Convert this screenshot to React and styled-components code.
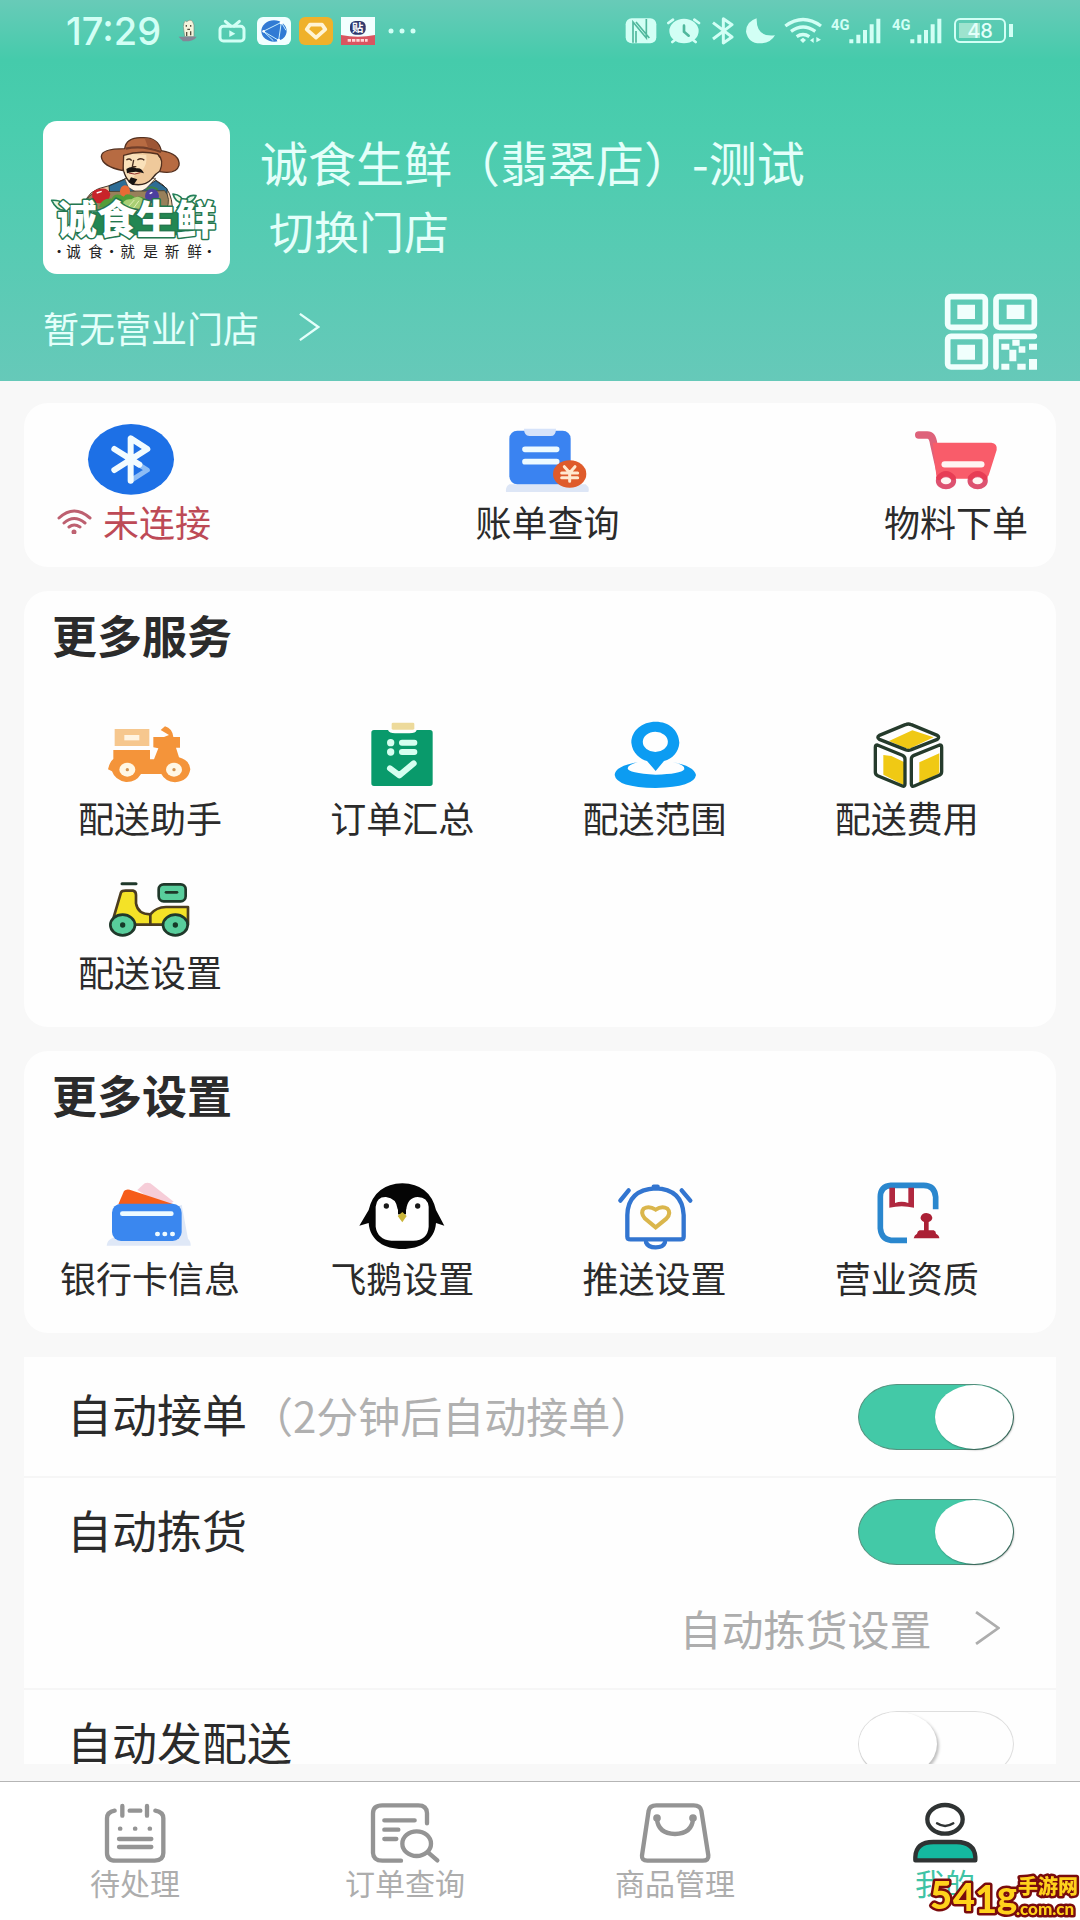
import React, { useState } from 'react';
import styled, { createGlobalStyle } from 'styled-components';

const GlobalStyle = createGlobalStyle`
    * {
        box-sizing: border-box;
    }

    body {
        margin: 0;
        color: #2b2b2b;
        background: #f8f8f8;
        font-family: "Noto Sans CJK SC", sans-serif;
    }

    button, input {
        margin: 0;
        padding: 0;
        border: 0;
        color: inherit;
        background: none;
        font: inherit;
    }

    a {
        color: inherit;
        text-decoration: none;
    }

    svg {
        display: block;
        flex: none;
    }
`;

const Page = styled.div`
    display: flex;
    flex-direction: column;
    height: 100vh;
    overflow: hidden;
`;

/* header */

const Hero = styled.header`
    flex: none;
    color: #e4fffa;
    background: linear-gradient(#68cbb8 0, #45cbab 60px, #4acdae 130px, #66c9b9 100%);
`;

const StatusBar = styled.div`
    display: flex;
    justify-content: space-between;
    align-items: center;
    height: 60px;
    padding: 2px 67px 0 66px;
    color: #d2fff5;
`;

const StatusGroup = styled.div`
    display: flex;
    align-items: center;
    gap: ${props => props.$gap}px;
`;

const Clock = styled.time`
    margin-right: 4px;
    font: 500 38px/40px Inter, sans-serif;
`;

const Store = styled.div`
    display: flex;
    gap: 30px;
    padding: 61px 43px 0;
`;

const Logo = styled.div`
    flex: none;
    border-radius: 14px;
    background: #fff;
    overflow: hidden;
`;

const StoreText = styled.div`
    display: flex;
    flex-direction: column;
    align-items: flex-start;
    gap: 14px;
    padding-top: 12px;
`;

const StoreName = styled.h1`
    margin: 0;
    font-size: 48px;
    font-weight: 400;
    line-height: 56px;
`;

const SwitchStore = styled.button`
    padding-left: 9px;
    font-size: 45px;
    line-height: 56px;
`;

const HeroFoot = styled.div`
    display: flex;
    justify-content: space-between;
    align-items: flex-start;
    padding: 19px 42px 10px 43px;
`;

const OpenStores = styled.a`
    display: flex;
    align-items: center;
    gap: 40px;
    font-size: 36px;
    line-height: 68px;
`;

/* cards */

const Main = styled.main`
    flex: 1;
    display: flex;
    flex-direction: column;
    gap: 24px;
    min-height: 0;
    padding: 22px 24px 17px;
`;

const Card = styled.section`
    flex: none;
    border-radius: 24px;
    background: #fefefe;
`;

const QuickCard = styled(Card)`
    display: flex;
    justify-content: space-between;
    padding: 16px 28px 28px 33px;
`;

const GridCard = styled(Card)`
    padding: 16px 23px 38px 0;
`;

const CardTitle = styled.h2`
    margin: 0 0 52px 28px;
    font-size: 45px;
    line-height: 56px;
`;

const Grid = styled.div`
    display: grid;
    grid-template-columns: repeat(4, 1fr);
    row-gap: 34px;
`;

const Entry = styled.button`
    display: flex;
    flex-direction: column;
    align-items: center;
    gap: 4px;
`;

const EntryLabel = styled.span`
    display: flex;
    align-items: center;
    gap: 11px;
    color: ${props => props.$alert ? '#bd4a56' : 'inherit'};
    font-size: 36px;
    line-height: 36px;
    white-space: nowrap;
`;

/* settings */

const Settings = styled.section`
    flex: 1;
    min-height: 0;
    background: #fefefe;
    overflow: hidden;
`;

const Setting = styled.div`
    border-bottom: 2px solid #f6f6f6;
`;

const SettingRow = styled.div`
    display: flex;
    justify-content: space-between;
    align-items: center;
    height: ${props => props.$tall ? 119 : 108}px;
    padding: 0 42px 0 43px;
`;

const SettingLabel = styled.label`
    padding-bottom: 4px;
    font-size: 45px;
    line-height: 60px;
`;

const Hint = styled.span`
    margin-left: 4px;
    color: #b0b0b0;
    font-size: 42px;
`;

const SettingLink = styled.a`
    display: flex;
    justify-content: flex-end;
    align-items: center;
    gap: 43px;
    padding: 0 56px 18px 0;
    color: #adadad;
    font-size: 42px;
    line-height: 84px;
`;

const Toggle = styled.input`
    appearance: none;
    flex: none;
    width: 156px;
    height: 66px;
    border: 1px solid #dedede;
    border-radius: 39px / 33px;
    background: #fefefe;

    &::before {
        content: '';
        display: block;
        width: 78px;
        height: 64px;
        border-radius: 50%;
        background: #fff;
        box-shadow: 2px 2px 3px rgba(0, 0, 0, 0.25);
    }

    &:checked {
        border-color: #55927f;
        background: #43c9a7;
    }

    &:checked::before {
        margin-left: auto;
        box-shadow: 1px 1px 2px rgba(0, 0, 0, 0.4);
    }
`;

/* bottom tabs */

const TabBar = styled.nav`
    flex: none;
    display: grid;
    grid-template-columns: repeat(4, 1fr);
    padding: 15px 0 25px;
    border-top: 1px solid #b5b5b5;
    background: #fff;
`;

const Tab = styled.a`
    display: flex;
    flex-direction: column;
    align-items: center;
    color: ${props => props.$active ? '#3fc3a5' : '#adadad'};
    font-size: 30px;
    line-height: 26px;
`;

const Watermark = styled.div`
    position: fixed;
    right: 0;
    bottom: 0;
`;

/* drawings */

const EntryIcon = ({ box, children }) => (
    <svg width="96" height="80" viewBox={`${box} 288 240`} fill="none" strokeLinecap="round" strokeLinejoin="round">{children}</svg>
);

const TabIcon = ({ box, children }) => (
    <svg width="80" height="72" viewBox={`${box} 240 216`} fill="none" stroke="#949494" strokeWidth="13" strokeLinecap="round" strokeLinejoin="round">{children}</svg>
);

const Chevron = ({ size = 28 }) => (
    <svg width={size * 3 / 4} height={size} viewBox="0 0 24 32" fill="none" stroke="currentColor" strokeWidth="2.6"><path d="M1 1l21 15L1 31" /></svg>
);

const StoreLogo = () => (
    <svg width="187" height="153" viewBox="40 33 561 459" strokeLinejoin="round">
        <path d="M165 285Q170 240 235 228L290 205H370L400 225Q425 245 428 290V300H165z" fill="#e9c8a2" stroke="#49382c" strokeWidth="3" />
        <path d="M238 228L290 206L330 242L378 212L412 236V300H245z" fill="#2d6d96" stroke="#20343c" strokeWidth="3" />
        <path d="M285 206L378 205L350 235L325 250L296 232z" fill="#fff5e5" stroke="#49382c" strokeWidth="2" />
        <path d="M277 130Q275 200 307 222Q345 230 365 208Q378 190 395 180Q405 155 388 138L378 120H280z" fill="#efc99b" stroke="#35251c" strokeWidth="4" />
        <path d="M280 130Q277 195 305 215Q318 185 334 184Q354 167 350 135z" fill="#fae1ba" />
        <path d="M296 216L304 202L323 208L311 226z" fill="#171311" />
        <path d="M290 177Q306 166 320 175Q336 172 343 190Q319 180 292 190z" fill="#171311" />
        <path d="M297 189Q315 196 332 188" fill="none" stroke="#8c2c27" strokeWidth="3" />
        <path d="M290 150q10-7 16 2M323 150q12-8 21 1M312 150l-4 20h12" fill="none" stroke="#493023" strokeWidth="4" />
        <path d="M215 140Q215 116 285 116Q290 80 340 83Q385 82 395 122Q452 132 448 166Q440 194 390 185Q405 150 384 132Q330 120 282 136L280 182Q218 170 215 140z" fill="#b76b42" stroke="#53301f" strokeWidth="4" />
        <path d="M288 116Q340 105 394 126" fill="none" stroke="#713f2a" strokeWidth="7" />
        <path d="M345 85Q384 84 391 119L355 112z" fill="#9d5635" />
        <path d="M168 282Q170 255 205 245L405 242Q425 265 410 300H172z" fill="#98805a" stroke="#4f4634" strokeWidth="3" />
        <path d="M188 264Q182 240 207 237Q235 230 242 252Q240 276 213 280Q192 281 188 264z" fill="#c8242a" />
        <path d="M201 249l15-5" stroke="#fff" strokeWidth="4" />
        <ellipse cx="286" cy="244" rx="15" ry="18" fill="#e96b35" />
        <path d="M208 292Q215 264 246 266Q257 245 282 260Q292 245 316 262Q350 250 355 295z" fill="#529d39" />
        <path d="M276 292Q280 264 305 268Q330 248 350 280L342 297z" fill="#a9cf74" />
        <path d="M296 290l18-20M312 294l16-22" stroke="#e3efb6" strokeWidth="3" />
        <circle cx="367" cy="258" r="21" fill="#4d3f9f" />
        <path d="M350 239q14-14 34 0" fill="none" stroke="#3d8145" strokeWidth="6" />
        <path d="M360 251l8-4" stroke="#fff" strokeWidth="4" />
        <path d="M66 271Q105 268 108 301Q81 303 66 271zM430 252Q459 255 461 278Q437 279 430 252zM466 279Q472 252 499 257Q490 280 466 279zM441 295q15-22 38-8" fill="#e9f8e5" stroke="#24805a" strokeWidth="5" />
        <path d="M190 305H470V376H190z" fill="#238752" />
        <text x="82" y="372" fontFamily="Noto Sans CJK SC" fontSize="119" fontWeight="900" fill="#fff" stroke="#24774f" strokeWidth="9" paintOrder="stroke">诚食生鲜</text>
        <text x="66 109 176 224 272 341 405 473 517" y="441" fontFamily="Noto Sans CJK SC" fontSize="44" fill="#222">·诚食·就是新鲜·</text>
    </svg>
);

const QrIcon = () => (
    <svg width="94" height="78" viewBox="1450 490 282 234" fill="#f0fffd">
        <g fill="none" stroke="#f0fffd" strokeWidth="17">
            <rect x="1461" y="501" width="113" height="92" rx="10" />
            <rect x="1606" y="501" width="115" height="92" rx="10" />
            <rect x="1461" y="620" width="113" height="92" rx="10" />
            <path d="M1606 712V620H1721" strokeLinecap="round" strokeLinejoin="round" />
        </g>
        <path d="M1490 525h53v43h-53zM1638 525h53v43h-53zM1490 645h53v45h-53z" />
        <path d="M1622 642h24v18h-24zM1655 630h22v18h-22zM1674 650h20v19h-20zM1646 660h21v35h-21zM1705 642h24v18h-24zM1622 702h24v18h-24zM1670 702h25v18h-25zM1705 688h24v32h-24z" />
    </svg>
);

const AppIcons = () => (
    <>
        <svg width="34" height="30" viewBox="403 48 102 90">
            <path d="M434 80Q436 58 444 65Q460 52 466 75V110H438z" fill="#f4f3db" stroke="#7a8d80" strokeWidth="2" />
            <path d="M443 75v5M456 75v5M446 88h8M444 96v12M456 94v12" stroke="#55503f" strokeWidth="4" />
            <path d="M420 110H474Q466 125 433 124z" fill="#858596" />
        </svg>
        <svg width="34" height="30" viewBox="525 48 102 90" fill="none" stroke="#d2fff5" strokeWidth="9" strokeLinecap="round">
            <rect x="540" y="79" width="72" height="44" rx="10" />
            <path d="M556 64l16 14M598 64l-16 14" />
            <path d="M568 91v20l18-10z" fill="#d2fff5" stroke="none" />
        </svg>
        <svg width="34" height="28" viewBox="651 51 102 84">
            <rect x="651" y="51" width="102" height="84" rx="18" fill="#f1ffff" />
            <ellipse cx="702" cy="93" rx="38" ry="32" fill="#307bd4" />
            <path d="M670 94L724 67L716 121zM670 94l30 28M724 67l14 24" fill="none" stroke="#c9f0ff" strokeWidth="3" />
            <circle cx="724" cy="68" r="5" fill="#fff" /><circle cx="716" cy="121" r="5" fill="#fff" /><circle cx="671" cy="94" r="4" fill="#fff" />
        </svg>
        <svg width="34" height="28" viewBox="777 51 102 84">
            <rect x="777" y="51" width="102" height="84" rx="18" fill="#efb12b" />
            <path d="M810 74H846L856 88L828 113L800 88z" fill="none" stroke="#fff4d5" strokeWidth="11" strokeLinejoin="round" />
        </svg>
        <svg width="34" height="28" viewBox="903 51 102 84">
            <path d="M903 51h102v84H903z" fill="#f2ffff" />
            <path d="M903 105q51 10 102 0v30H903z" fill="#d95560" />
            <rect x="930" y="63" width="47" height="41" rx="16" fill="#30396e" />
            <text x="936" y="96" fontFamily="Noto Sans CJK SC" fontSize="34" fontWeight="700" fill="#fff">贴</text>
            <path d="M923 121h60" stroke="#ffd8d9" strokeWidth="8" strokeDasharray="10 3" />
        </svg>
        <svg width="34" height="28" viewBox="0 0 34 28" fill="#d2fff5"><circle cx="8" cy="14" r="2.5" /><circle cx="19" cy="14" r="2.5" /><circle cx="30" cy="14" r="2.5" /></svg>
    </>
);

const Signal = () => (
    <svg width="52" height="28" viewBox="0 0 156 84" fill="#d2fff5">
        <text x="0" y="39" fontFamily="Roboto" fontSize="44" fontWeight="700">4G</text>
        <path d="M55 67h12v12H55zM76 53h12v26H76zM96 39h12v40H96zM116 22h12v57H116zM136 5h12v74H136z" />
    </svg>
);

const SystemIcons = () => (
    <>
        <svg width="34" height="28" viewBox="80 50 102 84">
            <rect x="85" y="54" width="92" height="75" rx="18" fill="#d2fff5" />
            <path d="M107 127V65L147 113V56M116 127V92M116 65L156 113" fill="none" stroke="#50b89d" strokeWidth="5" />
        </svg>
        <svg width="34" height="28" viewBox="207 50 102 84" fill="none" stroke="#d2fff5" strokeWidth="8" strokeLinecap="round">
            <ellipse cx="258" cy="92" rx="40" ry="33" fill="#d2fff5" />
            <path d="M211 68l14-10M303 68l-14-10M232 118l-9 7M284 118l9 7" />
            <path d="M258 76v18l14 12" stroke="#50b89d" />
        </svg>
        <svg width="26" height="28" viewBox="334 50 78 84" fill="none" stroke="#d2fff5" strokeWidth="9" strokeLinejoin="round">
            <path d="M343 67L400 110L374 128V55L400 73L343 116" />
        </svg>
        <svg width="30" height="28" viewBox="437 50 90 84"><path d="M472 54Q440 64 440 94Q447 129 482 129Q514 129 527 105Q470 112 472 54z" fill="#d2fff5" /></svg>
        <svg width="38" height="28" viewBox="552 50 114 84" fill="none" stroke="#d2fff5" strokeWidth="10">
            <path d="M556 77Q609 38 663 77M573 93Q609 67 646 93M590 109Q609 96 628 109" />
            <path d="M600 119l9-7 9 7-9 9zM641 112v16l-11-8zM649 110v16l14-8z" fill="#d2fff5" stroke="none" />
        </svg>
        <Signal />
        <Signal />
        <svg width="60" height="28" viewBox="0 0 60 28">
            <rect x="2" y="2" width="50" height="23" rx="5" fill="none" stroke="#d2fff5" strokeWidth="2" />
            <path d="M6 6h21v15H6z" fill="#9de3ce" />
            <path d="M56 7h4v13h-4z" fill="#d2fff5" />
            <text x="27" y="21" fontFamily="Inter" fontSize="20" fontWeight="500" textAnchor="middle" fill="#e4fffa">48</text>
        </svg>
    </>
);

const WifiIcon = () => (
    <svg width="35" height="26" viewBox="0 0 35 26" fill="none" stroke="#bd6070" strokeWidth="3" strokeLinecap="round">
        <path d="M2 10Q17-4 33 10M7 15Q17 6 28 15M12 19Q17 15 23 19" />
        <circle cx="17" cy="24" r="1" fill="#bd4a56" />
    </svg>
);

const BluetoothIcon = () => (
    <EntryIcon box="258 87">
        <ellipse cx="393" cy="208" rx="129" ry="106" fill="#1d70e6" />
        <path d="M392 272L442 240L392 208" stroke="#8dbdf5" strokeWidth="15" />
        <path d="M343 240L442 177L392 145V272M343 177L418 224" stroke="#f2fcff" strokeWidth="18" />
    </EntryIcon>
);

const BillIcon = () => (
    <EntryIcon box="1497 87">
        <path d="M1528 283H1757Q1770 292 1765 306H1518Q1516 290 1528 283z" fill="#dde6f6" />
        <rect x="1528" y="122" width="184" height="161" rx="24" fill="#3a83f1" />
        <path d="M1572 116H1668Q1668 138 1652 138H1588Q1572 136 1572 116z" fill="#d6e3fa" />
        <path d="M1575 178h95M1575 215h95" stroke="#edfaff" strokeWidth="17" />
        <ellipse cx="1709" cy="252" rx="50" ry="41" fill="#df5b2b" />
        <path d="M1693 230l16 18 16-18M1709 248v26M1685 249h48M1685 263h48" stroke="#ffe9d0" strokeWidth="9" />
    </EntryIcon>
);

const CartIcon = () => (
    <EntryIcon box="804 87">
        <path d="M836 135H862Q878 135 881 162L902 255" stroke="#de627a" strokeWidth="22" />
        <path d="M878 158H1054Q1073 160 1070 180L1048 250Q1044 266 1028 266H890z" fill="#f95c6a" />
        <path d="M914 223h110" stroke="#fff5f2" strokeWidth="19" />
        <ellipse cx="918" cy="272" rx="23" ry="18" fill="#fff5f2" stroke="#dd5270" strokeWidth="15" />
        <ellipse cx="1013" cy="272" rx="23" ry="18" fill="#fff5f2" stroke="#dd5270" strokeWidth="15" />
        <path d="M896 263Q918 238 940 263M991 263Q1013 238 1035 263" stroke="#e73c54" strokeWidth="15" />
    </EntryIcon>
);

const MopedIcon = () => (
    <EntryIcon box="216 375">
        <path d="M254 417H358V468H254z" fill="#f6c78e" />
        <path d="M283 435h45v16h-45z" fill="#fff4e2" />
        <path d="M250 480H360V508H372L385 475L370 472V441H402L417 435L392 420L405 409Q427 415 430 441H450V473H438L447 502Q480 512 481 538Q475 574 435 577Q405 574 394 552H333Q318 577 288 576Q255 571 246 544L234 538Q239 515 250 507z" fill="#f4943a" />
        <ellipse cx="292" cy="539" rx="24" ry="21" fill="#fff7e5" />
        <ellipse cx="432" cy="539" rx="24" ry="21" fill="#fff7e5" />
        <circle cx="292" cy="539" r="5" fill="#d19350" /><circle cx="432" cy="539" r="5" fill="#d19350" />
    </EntryIcon>
);

const ClipboardIcon = () => (
    <EntryIcon box="972 375">
        <path d="M1032 420H1074Q1078 430 1095 430H1138Q1158 430 1160 420H1200Q1208 420 1208 428V580Q1208 588 1200 588H1032Q1024 588 1024 580V428Q1024 420 1032 420z" fill="#099a6b" />
        <rect x="1085" y="398" width="68" height="21" rx="4" fill="#edda9b" />
        <circle cx="1082" cy="458" r="11" fill="#d5fff0" /><circle cx="1082" cy="486" r="11" fill="#d5fff0" />
        <path d="M1116 458h37M1116 486h37M1080 535l28 21 43-36" stroke="#d5fff0" strokeWidth="18" />
    </EntryIcon>
);

const PinIcon = () => (
    <EntryIcon box="200 75">
        <path d="M293 216Q223 229 223 255Q228 292 346 294Q462 291 467 255Q462 229 397 216Q435 224 432 238Q421 253 346 254Q263 250 262 235Q263 224 293 216z" fill="#0c9cf2" />
        <path fillRule="evenodd" d="M346 95C305 95 273 122 273 158C276 191 301 207 320 213L346 243L371 213C397 205 415 187 417 158C415 120 386 95 346 95zM345 125A37 30 0 1 1 345 186A37 30 0 1 1 345 125z" fill="#0c9cf2" />
    </EntryIcon>
);

const BoxIcon = () => (
    <EntryIcon box="957 75">
        <path d="M1047 153L1117 121L1181 142L1105 178zM1030 195L1054 198L1092 216V286L1030 254zM1138 217L1198 190V250L1138 281z" fill="#f0c914" />
        <path d="M1096 104Q1105 100 1114 104L1192 136Q1200 142 1192 148L1114 179Q1105 183 1096 179L1018 148Q1009 142 1018 136zM1012 165Q1006 165 1006 172V247Q1006 254 1013 257L1087 288Q1095 291 1095 282V207Q1095 200 1087 196zM1199 165Q1205 165 1205 172V245Q1205 252 1198 256L1123 288Q1114 291 1114 282V207Q1114 200 1122 196z" stroke="#253b2c" strokeWidth="10" />
    </EntryIcon>
);

const ScooterIcon = () => (
    <EntryIcon box="216 837">
        <g stroke="#1f382a" strokeWidth="8">
            <path d="M276 881h42" strokeWidth="9" />
            <path d="M251 982L273 907Q276 902 287 902H309Q318 904 318 915V940Q323 972 361 973Q378 952 408 951H474V1004H361H249z" fill="#f4e227" stroke="#4c3d20" />
            <path d="M361 973V1004" stroke="#4c3d20" />
            <rect x="386" y="883" width="81" height="51" rx="15" fill="#58ce9c" />
            <path d="M408 907h33" />
            <ellipse cx="278" cy="1005" rx="37" ry="31" fill="#58ce9c" />
            <ellipse cx="436" cy="1005" rx="37" ry="31" fill="#58ce9c" />
        </g>
        <circle cx="278" cy="1005" r="8" fill="#153a28" /><circle cx="436" cy="1005" r="8" fill="#153a28" />
    </EntryIcon>
);

const CardsIcon = () => (
    <EntryIcon box="216 345">
        <path d="M230 557Q232 541 246 535L455 434L474 536Q483 545 482 557z" fill="#dfe8f7" />
        <path d="M322 390L344 370Q352 366 361 370L431 425L400 440z" fill="#f6cdd8" />
        <path d="M265 433L282 393Q287 387 299 389L431 433z" fill="#f65c19" />
        <rect x="246" y="431" width="209" height="112" rx="27" fill="#3a87ef" />
        <path d="M277 461h147M382 522h1M404 522h1M427 522h1" stroke="#edfaff" strokeWidth="14" />
    </EntryIcon>
);

const PenguinIcon = () => (
    <EntryIcon box="972 345">
        <path d="M1016 450Q1035 372 1117 370Q1199 372 1218 450L1243 497L1218 489C1214 542 1170 567 1117 567C1064 567 1020 542 1016 489L988 497z" fill="#050505" />
        <path d="M1037 440Q1040 410 1068 411Q1099 414 1103 448L1116 466L1129 448Q1133 412 1163 411Q1193 412 1196 440V500Q1193 540 1150 542H1084Q1042 538 1037 500z" fill="#fff" />
        <path d="M1104 430H1128V463H1104z" fill="#050505" />
        <path d="M1103 468L1117 456L1130 468L1117 487z" fill="#cbb63a" />
        <circle cx="1069" cy="438" r="8" fill="#181818" /><circle cx="1163" cy="438" r="8" fill="#181818" />
    </EntryIcon>
);

const BellIcon = () => (
    <EntryIcon box="200 45">
        <g stroke="#3275d0" strokeWidth="13">
            <path d="M261 165Q263 89 345 85Q426 87 430 165V230Q430 238 420 238H271Q261 238 261 230zM340 80h12" />
            <path d="M240 122L265 91M424 91L450 122M317 247Q323 262 346 262Q369 262 374 247" />
        </g>
        <path d="M346 202L314 176Q299 159 310 146Q326 136 346 149Q365 136 381 146Q394 159 378 176z" stroke="#dab64c" strokeWidth="12" strokeLinejoin="miter" />
    </EntryIcon>
);

const LicenseIcon = () => (
    <EntryIcon box="957 45">
        <path d="M1187 148V111Q1184 76 1151 76H1053Q1021 79 1021 111V205Q1024 238 1053 241H1101" stroke="#2a87ce" strokeWidth="17" strokeLinecap="butt" />
        <path d="M1048 83H1065V129Q1085 121 1105 129V83H1122V143Q1085 134 1048 143z" fill="#b0283f" />
        <path d="M1152 186Q1140 180 1142 171Q1146 159 1159 159Q1174 160 1177 173Q1177 181 1166 186V211H1181Q1188 214 1188 221Q1198 226 1198 235H1121Q1123 224 1131 221Q1132 213 1139 211H1152z" fill="#ab2035" />
    </EntryIcon>
);

const TodoIcon = () => (
    <TabIcon box="285 81">
        <path d="M344 122Q321 126 321 145V249Q321 272 347 272H464Q490 271 490 249V145Q490 126 466 122M389 122h32M367 108v29M441 108v29" />
        <path d="M357 207h97M357 231h97M360 176h1M405 176h1M449 176h1" />
    </TabIcon>
);

const OrdersIcon = () => (
    <TabIcon box="1095 81">
        <path d="M1281 160V129Q1280 106 1255 106H1147Q1119 106 1119 130V249Q1120 272 1147 272H1203" />
        <path d="M1153 151h91M1153 179h42M1153 207h36" />
        <ellipse cx="1250" cy="221" rx="43" ry="37" />
        <path d="M1284 247l28 24" />
    </TabIcon>
);

const GoodsIcon = () => (
    <TabIcon box="1905 81">
        <path d="M1969 106H2081Q2101 106 2104 122L2125 256Q2127 272 2108 272H1942Q1924 272 1926 256L1946 122Q1949 106 1969 106z" />
        <path d="M1971 147Q1974 190 2025 192Q2076 190 2079 147" />
        <circle cx="1971" cy="144" r="5" /><circle cx="2079" cy="144" r="5" />
    </TabIcon>
);

const MineIcon = () => (
    <TabIcon box="2715 81">
        <g stroke="#2f3333">
            <ellipse cx="2835" cy="148" rx="53" ry="43" />
            <path d="M2811 160Q2835 176 2860 160" strokeWidth="7" />
            <path d="M2746 271V261Q2748 216 2800 216H2870Q2923 217 2926 261V271z" fill="#14b9a0" />
        </g>
    </TabIcon>
);

const services = [
    ['配送助手', MopedIcon],
    ['订单汇总', ClipboardIcon],
    ['配送范围', PinIcon],
    ['配送费用', BoxIcon],
    ['配送设置', ScooterIcon],
];

const options = [
    ['银行卡信息', CardsIcon],
    ['飞鹅设置', PenguinIcon],
    ['推送设置', BellIcon],
    ['营业资质', LicenseIcon],
];

const tabs = [
    ['待处理', TodoIcon],
    ['订单查询', OrdersIcon],
    ['商品管理', GoodsIcon],
    ['我的', MineIcon],
];

const EntryCard = ({ title, items }) => (
    <GridCard>
        <CardTitle>{title}</CardTitle>
        <Grid>
            {items.map(([label, Icon]) => (
                <Entry key={label}>
                    <Icon />
                    <EntryLabel>{label}</EntryLabel>
                </Entry>
            ))}
        </Grid>
    </GridCard>
);

const ToggleRow = ({ id, label, hint, tall, initial }) => {
    const [on, setOn] = useState(initial);

    return <SettingRow $tall={tall}>
        <SettingLabel htmlFor={id}>{label}{hint && <Hint>{hint}</Hint>}</SettingLabel>
        <Toggle id={id} type="checkbox" checked={on} onChange={() => setOn(!on)} />
    </SettingRow>;
};

export default () => {
    return <Page>
        <GlobalStyle />
        <Hero>
            <StatusBar>
                <StatusGroup $gap={8}>
                    <Clock>17:29</Clock>
                    <AppIcons />
                </StatusGroup>
                <StatusGroup $gap={9}>
                    <SystemIcons />
                </StatusGroup>
            </StatusBar>
            <Store>
                <Logo><StoreLogo /></Logo>
                <StoreText>
                    <StoreName>诚食生鲜（翡翠店）-测试</StoreName>
                    <SwitchStore>切换门店</SwitchStore>
                </StoreText>
            </Store>
            <HeroFoot>
                <OpenStores href="#stores">暂无营业门店 <Chevron /></OpenStores>
                <button aria-label="二维码"><QrIcon /></button>
            </HeroFoot>
        </Hero>
        <Main>
            <QuickCard>
                <Entry>
                    <BluetoothIcon />
                    <EntryLabel $alert><WifiIcon />未连接</EntryLabel>
                </Entry>
                <Entry>
                    <BillIcon />
                    <EntryLabel>账单查询</EntryLabel>
                </Entry>
                <Entry>
                    <CartIcon />
                    <EntryLabel>物料下单</EntryLabel>
                </Entry>
            </QuickCard>
            <EntryCard title="更多服务" items={services} />
            <EntryCard title="更多设置" items={options} />
            <Settings>
                <Setting>
                    <ToggleRow id="accept" label="自动接单" hint="（2分钟后自动接单）" tall initial />
                </Setting>
                <Setting>
                    <ToggleRow id="pick" label="自动拣货" initial />
                    <SettingLink href="#pick-settings">自动拣货设置 <Chevron size={34} /></SettingLink>
                </Setting>
                <Setting>
                    <ToggleRow id="deliver" label="自动发配送" initial={false} />
                </Setting>
            </Settings>
        </Main>
        <TabBar>
            {tabs.map(([label, Icon]) => (
                <Tab key={label} href="#" $active={label === '我的'}>
                    <Icon />
                    {label}
                </Tab>
            ))}
        </TabBar>
        <Watermark>
            <svg width="152" height="54" viewBox="0 0 152 54" fill="#ffd21c" stroke="#790b0d" strokeWidth="5" strokeLinejoin="round" paintOrder="stroke" fontWeight="900">
                <text x="2 25 47 69" y="43 45 47 42" fontFamily="Lato" fontSize="38">541g</text>
                <text x="90" y="28" fontFamily="Noto Sans CJK SC" fontSize="20">手游网</text>
                <text x="88" y="49" fontFamily="Lato" fontSize="17">.com.cn</text>
            </svg>
        </Watermark>
    </Page>;
};
